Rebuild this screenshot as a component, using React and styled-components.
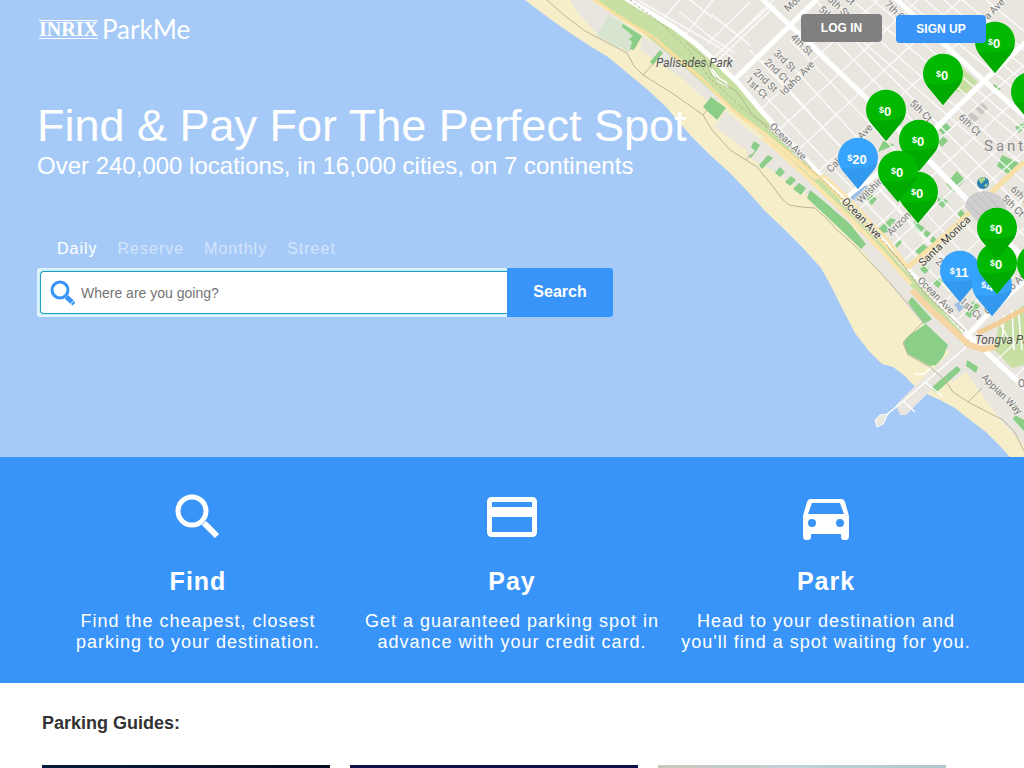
import React from 'react';
import styled, { createGlobalStyle } from 'styled-components';

const GlobalStyle = createGlobalStyle`
  *, *::before, *::after { box-sizing: border-box; }
  body { margin: 0; background: #fff; color: #333; font-family: "Liberation Sans", Arial, sans-serif; }
  h1, h2, h3, p { margin: 0; }
`;

const Hero = styled.section`
  position: relative;
  min-height: 457px;
  overflow: hidden;
  background: #a6caf8;
  color: #fff;
`;

const MapArt = styled.svg`
  position: absolute;
  top: 0;
  right: 0;
  width: 504px;
  height: 457px;
`;

const HeroContent = styled.div`
  position: relative;
  padding: 14px 38px 0 37px;
`;

const Header = styled.header`
  display: flex;
  justify-content: space-between;
  align-items: flex-start;
`;

const Logo = styled.a`
  display: flex;
  align-items: center;
  gap: 4px;
  height: 30px;
  padding-left: 2px;
  color: #fff;
  text-decoration: none;
`;

const LogoInrix = styled.span`
  height: 19px;
  border-top: 1px solid #fff;
  border-bottom: 1px solid #fff;
  font: bold 20px/17px "Liberation Serif", serif;
`;

const LogoParkMe = styled.span`
  font: 26px/30px Lato, sans-serif;
`;

const Actions = styled.nav`
  display: flex;
  gap: 14px;
`;

const ActionButton = styled.button`
  width: ${(p) => (p.$primary ? 90 : 81)}px;
  height: 28px;
  margin-top: ${(p) => (p.$primary ? 1 : 0)}px;
  padding: 0;
  border: 0;
  border-radius: 4px;
  background: ${(p) => (p.$primary ? '#3994f9' : '#808080')};
  color: #fff;
  font: bold 12px "Liberation Sans", sans-serif;
`;

const Title = styled.h1`
  margin-top: 56px;
  font-size: 45px;
  font-weight: 400;
  line-height: 52px;
`;

const Subtitle = styled.p`
  font-size: 24px;
  line-height: 28px;
`;

const Tabs = styled.div`
  display: flex;
  gap: 20px;
  margin-top: 59px;
  padding-left: 20px;
`;

const Tab = styled.button`
  padding: 0;
  border: 0;
  background: none;
  color: ${(p) => (p.$active ? '#fff' : 'rgba(255, 255, 255, 0.5)')};
  font: 16px/20px "Liberation Sans", sans-serif;
  letter-spacing: 1px;
`;

const SearchForm = styled.form`
  display: flex;
  width: 576px;
  max-width: 100%;
  height: 49px;
  margin-top: 9px;
  border-radius: 3px;
  overflow: hidden;
  background: #e4f5fa;
`;

const SearchField = styled.label`
  display: flex;
  flex: 1;
  align-items: center;
  margin: 3px 0 3px 3px;
  padding-left: 8px;
  gap: 6px;
  border: 1px solid #1f9fc4;
  border-right: 0;
  border-radius: 4px 0 0 4px;
  background: #fff;
  box-shadow: 0 0 3px #8fdcf0;
`;

const SearchInput = styled.input`
  flex: 1;
  min-width: 0;
  padding: 0;
  border: 0;
  outline: 0;
  background: none;
  color: #222;
  font: 14px/20px "Liberation Sans", sans-serif;
  &::placeholder { color: #757575; }
`;

const SearchButton = styled.button`
  width: 106px;
  padding: 0 0 2px;
  border: 0;
  background: #3994f9;
  color: #fff;
  font: bold 16px "Liberation Sans", sans-serif;
`;

const Features = styled.section`
  display: grid;
  grid-template-columns: repeat(3, 1fr);
  padding: 30px 41px;
  min-height: 226px;
  background: #3994f9;
  color: #fff;
  text-align: center;
`;

const Feature = styled.article`
  display: flex;
  flex-direction: column;
  align-items: center;
`;

const FeatureIcon = styled.svg`
  width: 60px;
  height: 60px;
`;

const FeatureTitle = styled.h2`
  margin-top: 20px;
  font-size: 25px;
  line-height: 29px;
  letter-spacing: 1px;
`;

const FeatureText = styled.p`
  max-width: 300px;
  margin-top: 15px;
  font-size: 18px;
  line-height: 21px;
  letter-spacing: 1px;
`;

const Guides = styled.section`
  padding: 30px 42px 40px;
`;

const GuidesTitle = styled.h3`
  font-size: 18px;
  line-height: 21px;
`;

const GuideGrid = styled.div`
  display: grid;
  grid-template-columns: repeat(auto-fill, 288px);
  gap: 20px;
  margin-top: 31px;
`;

const GuideCard = styled.a`
  height: 180px;
  background: ${(p) => p.$fill};
`;

const COAST =
  'M525 0L546 16L570 33L590 46L608 57L625 71L648 90L667 108L690 135L710 155L730 173L750 194L765 211L783 228L803 248L821 268L831 286L843 310L855 333L868 350L882 364L893 367L905 376L918 390L940 400L955 408L970 420L986 432L1000 446L1010 457L1024 457V0Z';
const CITY =
  'M628 0L672 26L695 43L716 62L738 83L764 114L790 142L818 173L830 178L852 204L880 238L914 276L940 304L966 334L1024 392V0Z';
const PARK =
  'M596 0L628 0L672 26L695 43L716 62L738 83L764 114L790 142L818 173L826 182L852 205L880 238L914 276L968 335L950 330L905 280L867 235L820 187L780 150L735 112L682 65L637 28Z';

const BUILT = [
  'M570 0L590 0L625 22L608 16L598 35L578 13Z',
  'M642 36L655 43L677 58L703 82L721 100L707 101L683 79L659 63L640 50Z',
  'M725 111L780 155L805 178L842 213L861 231L840 216L805 193L768 168L748 157L746 150L715 127Z',
  'M861 232L900 270L938 310L950 319L975 338L1024 388V445L1004 424L990 406L966 372L954 381L940 381L906 415L900 415L896 405L932 369L950 353L923 325L885 278L850 236Z',
];

const LAWN = [
  'M623 24L642 36L634 50L630 49L632 42L629 39L633 36L622 27Z',
  'M660 50L663 53L653 65L650 62Z',
  'M711 97L726 108L717 120L703 107Z',
  'M754 141L760 145L757 150L751 158L749 157L755 151L751 147Z',
  'M768 155L773 158L762 169L759 165Z',
  'M780 167L785 172L780 177L775 173Z',
  'M791 176L796 180L790 186L785 182Z',
  'M799 183L806 188L801 195L793 189Z',
  'M810 190L820 198L850 224L866 244L861 249L838 227L807 198Z',
  'M912 297L932 319L924 324L908 302Z',
  'M926 324L948 345L943 357L936 365L930 366L908 354L903 344L908 336Z',
  'M957 366L961 370L936 393L931 388Z',
  'M967 360L978 367L976 373L966 366Z',
  'M1015 415L1024 420V431L1013 419Z',
  'M883 141L895 145L878 152L880 147Z',
  'M994 84L1001 89L996 92L991 89Z',
  'M946 123L951 128L943 135L939 130Z',
  'M943 136L948 141L942 147L938 142Z',
  'M957 171L965 180L954 192L946 184Z',
  'M1002 155L1019 163L1008 174L997 166Z',
  'M938 195L948 201L943 208L938 204Z',
  'M961 209L965 214L961 218L957 214Z',
  'M870 193L877 199L872 205L866 199Z',
  'M914 221L925 228L920 233L914 229Z',
  'M891 218L896 220L890 226L895 231L883 233L878 229Z',
  'M922 243L930 249L922 258L915 251Z',
  'M925 264L930 269L925 274L920 269Z',
  'M938 277L943 282L938 288L932 282Z',
  'M973 301L980 306L970 318L965 314Z',
  'M901 239L903 241L897 248L895 245Z',
  'M926 230L931 233L927 238L923 235Z',
  'M933 236L938 241L934 246L930 241Z',
  'M1015 127L1024 123V128L1019 133Z',
];

const MINOR = [
  'M638 0L720 48L735 60', 'M680 12L713 39L735 53', 'M660 22L680 0', 'M686 34L713 0', 'M707 44L750 2', 'M720 52L773 0',
  'M712 59L768 8', 'M716 62L775 6', 'M690 0L712 17', 'M712 15L750 45', 'M750 50L970 285', 'M746 76L950 292',
  'M762 60L945 262', 'M776 49L960 250', 'M790 40L990 250', 'M800 30L1024 262', 'M820 25L1024 236', 'M836 22L1024 210',
  'M815 0L1024 182', 'M833 0L1024 166', 'M852 0L1024 143', 'M873 0L1024 130', 'M905 0L1024 97', 'M925 0L1024 82',
  'M944 0L1024 67', 'M962 0L1024 50', 'M986 0L1024 31', 'M762 108L878 0', 'M780 129L918 0', 'M798 150L960 0',
  'M818 172L1005 0', 'M858 210L1024 65', 'M874 229L1024 92', 'M890 247L1024 125', 'M902 262L1024 151', 'M925 290L1024 199',
  'M940 306L1024 228', 'M955 322L1024 256', 'M965 390L1018 340', 'M985 405L1024 368', 'M950 352L1006 406',
];

const MAJOR = [
  'M622 -4L672 26L695 43L716 62L738 83L764 114L790 142L818 173L852 204L880 238L914 276L968 335L1030 393',
  'M733 81L820 -4',
  'M755 -8L820 54L900 130L1024 258',
  'M893 -4L940 40L984 81L1030 121',
  'M841 202L935 129L984 81L1030 38',
  'M965 338L992 310L1030 276',
];

const STREETS = [
  [773, 54, 44, '3rd St'], [764, 63, 44, '2nd Ct'], [753, 73, 44, '2nd St'], [745, 81, 44, '1st Ct'],
  [790, 38, 44, '4th St'], [784, 96, -45, 'Idaho Ave'], [788, 12, -42, 'Montana'], [818, 10, 44, '5th Ct'],
  [827, 0, 44, '5th St'], [832, -13, 44, '6th Ct'], [884, 5, 44, '7th Ct'], [988, 20, -45, 'a Ave'],
  [909, 104, 44, '5th Ct'], [958, 118, 44, '6th Ct'], [769, 127, 45, 'Ocean Ave'], [831, 173, -47, 'California Ave'],
  [861, 204, -45, 'Wilshire'], [891, 236, -45, 'Arizona'], [1010, 190, 44, '6th St'], [1001, 199, 44, '5th Ct'],
  [917, 281, 45, 'Ocean Ave'], [935, 262, 44, '2nd St'], [959, 302, 44, '1st Ct'], [988, 315, -45, 'Colorado Ave'],
  [981, 378, 45, 'Appian Way'], [1018, 387, 0, 'O'],
];

const PINS = [
  [995, 42, '0'], [943, 74, '0'], [1031, 92, '0'], [886, 110, '0'], [858, 158, '20', true],
  [918, 192, '0'], [919, 140, '0'], [898, 171, '0'], [960, 271, '11', true], [992, 285, '40', true],
  [1037, 264, '0'], [997, 263, '0'], [997, 228, '0'],
];

function Pin({ x, y, price, blue }) {
  return (
    <g transform={`translate(${x} ${y})`}>
      <path d="M0 31L-15 13A20 20 0 1 1 15 13Z" fill={blue ? '#36a3fd' : '#00b900'} />
      <path d="M-17 10Q5 13 19 5Q18 9 15 13L0 31L-15 13Z" fill={blue ? '#3299ee' : '#00aa00'} />
      <text x="-1" y="6" textAnchor="middle" fill="#fff" fontFamily="Liberation Sans, sans-serif" fontWeight="700" fontSize="13">
        <tspan fontSize="9" dy="-3">$</tspan>
        <tspan dy="3">{price}</tspan>
      </text>
    </g>
  );
}

function CoastMap() {
  return (
    <MapArt viewBox="520 0 504 457" aria-hidden="true">
      <defs>
        <clipPath id="city"><path d={CITY} /></clipPath>
      </defs>
      <path d={COAST} fill="#f6eec9" />
      {BUILT.map((d) => <path key={d} d={d} fill="#e9e6df" />)}
      <path d="M608 15L623 23L642 36L629 52L612 44L597 36Z" fill="#d7e5d0" />
      <path d={PARK} fill="#c8dfa4" />
      <path d={CITY} fill="#e9e6df" />
      <path d="M962 68L978 82L966 94L952 90Z M1000 320L1024 305V365L1012 368L994 349Z" fill="#c8dfa4" />
      <path d="M970 111L979 118L968 129L962 123Z M981 101L988 108L982 115L975 109Z" fill="#cbc8c4" />
      {LAWN.map((d) => <path key={d} d={d} fill="#8ace88" />)}
      <g fill="none" stroke="#fff">
        <g clipPath="url(#city)" strokeWidth="1.6" opacity="0.8">
          {MINOR.map((d) => <path key={d} d={d} />)}
        </g>
        {MAJOR.map((d) => <path key={d} d={d} strokeWidth="5" />)}
        <path d="M880 420L906 399L966 347L976 336M903 401L915 412M925 382L942 396M914 374H924L931 368" strokeWidth="1.5" />
        <path d="M712 69L720 79L726 82L727 86L718 81L709 68M998 320L1010 342M1004 315L1002 344M1012 310L1014 350M1018 308L1022 350" strokeWidth="1.5" />
      </g>
      <path d="M854 194L866 185L869 190L857 201L850 198Z" fill="#9ebfe2" />
      <path d="M954 304L962 301L966 306L959 312Z" fill="#9ebfe2" />
      <path d="M875 420L880 415L888 414L883 424L877 427Z" fill="#e9e6df" stroke="#fff" />
      <g fill="none" strokeLinejoin="round">
        <path d="M592 -2L620 17L653 37L703 80L733 110L780 146L819 177L854 211L881 241L907 268" stroke="#f8df9f" strokeWidth="3" />
        <path d="M749 124L764 133L783 150L807 171L815 178L824 176L845 195L887 239L907 266" stroke="#fae5ae" strokeWidth="3" />
        <path d="M764 138L807 177L850 218L880 249L911 284" stroke="#fae5ae" strokeWidth="4" />
        <path d="M912 290L930 309L951 328L969 345L983 349L996 347" stroke="#f6d4a3" strokeWidth="6" />
        <path d="M978 333L999 323L1024 309" stroke="#f3cd98" strokeWidth="5" />
        <path d="M907 268L940 240L1024 162" stroke="#f8e1a6" strokeWidth="5" />
        <path d="M547 0L565 16L585 31L627 53L634 66L643 75L672 93L703 115L712 130L730 150L746 160L757 167L771 184L782 199L789 205L801 207L815 208L828 220L835 228L855 246L890 283L923 322L903 342L908 355L930 367L945 380L953 392L968 402L1003 420L1014 431L1024 451" stroke="#bcb69a" />
        <path d="M643 75L653 64M703 115L707 110M746 160L751 154M968 402L982 388" stroke="#bcb69a" />
        <path d="M630 0L663 25L688 49L710 78L740 106L770 130L820 178L864 219L886 244L922 288L966 334" stroke="#afb78c" strokeDasharray="3 2" />
        <path d="M686 43L704 57L712 76L737 92L753 115L785 139L812 169M888 247L905 268L925 294L965 331" stroke="#afb78c" />
      </g>
      <path d="M965 207Q965 198 975 193Q985 189 996 194Q1006 198 1006 208V225H980Z" fill="#cfcece" />
      <path d="M967 202L990 225M971 197L998 224M976 194L1004 222M983 192L1005 214" fill="none" stroke="#bbb" />
      <circle cx="983" cy="183" r="6" fill="#287fb0" />
      <path d="M978 179Q983 175 986 179L981 184ZM984 185L988 183L986 188Z" fill="#a4cf8e" />
      <g fill="#777" stroke="#f2f0eb" strokeWidth="2" paintOrder="stroke" fontFamily="Roboto, sans-serif" fontSize="10">
        {STREETS.map(([x, y, angle, name]) => (
          <text key={`${name}${x}`} transform={`translate(${x} ${y}) rotate(${angle})`}>{name}</text>
        ))}
      </g>
      <g fill="#40403c" stroke="#f5f0dc" strokeWidth="2" paintOrder="stroke" fontFamily="Roboto, sans-serif" fontSize="11">
        <text transform="translate(841 202) rotate(46)">Ocean Ave</text>
        <text transform="translate(923 267) rotate(-44)">Santa Monica</text>
      </g>
      <g fill="#555" fontFamily="Roboto, sans-serif" fontSize="12" fontStyle="italic">
        <text x="656" y="67">Palisades Park</text>
        <text x="975" y="344">Tongva Park</text>
      </g>
      <text x="984" y="151" fill="#8a8a8a" fontFamily="Roboto, sans-serif" fontSize="15" letterSpacing="3">Santa Monica</text>
      {PINS.map(([x, y, price, blue]) => <Pin key={`${x}-${y}`} x={x} y={y} price={price} blue={blue} />)}
    </MapArt>
  );
}

const FEATURES = [
  {
    title: 'Find',
    text: 'Find the cheapest, closest parking to your destination.',
    icon: (
      <g fill="none" stroke="#fff" strokeWidth="5">
        <circle cx="24" cy="24" r="14" />
        <path d="M36 36L49 49" strokeWidth="6" />
      </g>
    ),
  },
  {
    title: 'Pay',
    text: 'Get a guaranteed parking spot in advance with your credit card.',
    icon: (
      <path
        fill="#fff"
        fillRule="evenodd"
        d="M10 10H50Q55 10 55 15V45Q55 50 50 50H10Q5 50 5 45V15Q5 10 10 10ZM10 15V20H50V15ZM10 30V45H50V30Z"
      />
    ),
  },
  {
    title: 'Park',
    text: "Head to your destination and you'll find a spot waiting for you.",
    icon: (
      <path
        fill="#fff"
        fillRule="evenodd"
        d="M15 12H45Q48 12 49 15L53 29V49Q53 53 50 53H48Q45 53 45 50V47H15V50Q15 53 12 53H10Q7 53 7 49V29L11 15Q12 12 15 12ZM16 16L12 27H48L44 16ZM16 32A4 4 0 1 0 16 40A4 4 0 1 0 16 32ZM44 32A4 4 0 1 0 44 40A4 4 0 1 0 44 32Z"
      />
    ),
  },
];

const GUIDES = [
  { name: 'Parking guide one', fill: 'linear-gradient(90deg, #071a3b, #080d20)' },
  { name: 'Parking guide two', fill: '#121048' },
  { name: 'Parking guide three', fill: 'linear-gradient(90deg, #c9c8bd, #bfd1d6 50%, #b1c6d0)' },
];

export default function App() {
  return (
    <>
      <GlobalStyle />
      <main>
        <Hero>
          <CoastMap />
          <HeroContent>
            <Header>
              <Logo href="#">
                <LogoInrix>INRIX</LogoInrix>
                <LogoParkMe>ParkMe</LogoParkMe>
              </Logo>
              <Actions>
                <ActionButton type="button">LOG IN</ActionButton>
                <ActionButton type="button" $primary>SIGN UP</ActionButton>
              </Actions>
            </Header>
            <Title>Find &amp; Pay For The Perfect Spot</Title>
            <Subtitle>Over 240,000 locations, in 16,000 cities, on 7 continents</Subtitle>
            <Tabs>
              {['Daily', 'Reserve', 'Monthly', 'Street'].map((name, i) => (
                <Tab key={name} type="button" $active={i === 0}>{name}</Tab>
              ))}
            </Tabs>
            <SearchForm onSubmit={(e) => e.preventDefault()}>
              <SearchField htmlFor="destination">
                <svg width="26" height="26" viewBox="0 0 26 26" fill="none" stroke="#3994f9" aria-hidden="true">
                  <circle cx="11" cy="10" r="8" strokeWidth="3" />
                  <path d="M17.5 17L23 22" strokeWidth="5" />
                  <path d="M23.5 22.5L25 24" strokeWidth="4" />
                </svg>
                <SearchInput id="destination" type="text" placeholder="Where are you going?" aria-label="Destination" autoFocus />
              </SearchField>
              <SearchButton type="submit">Search</SearchButton>
            </SearchForm>
          </HeroContent>
        </Hero>
        <Features>
          {FEATURES.map((f) => (
            <Feature key={f.title}>
              <FeatureIcon viewBox="0 0 60 60" aria-hidden="true">{f.icon}</FeatureIcon>
              <FeatureTitle>{f.title}</FeatureTitle>
              <FeatureText>{f.text}</FeatureText>
            </Feature>
          ))}
        </Features>
        <Guides>
          <GuidesTitle>Parking Guides:</GuidesTitle>
          <GuideGrid>
            {GUIDES.map((g) => <GuideCard key={g.name} href="#" aria-label={g.name} $fill={g.fill} />)}
          </GuideGrid>
        </Guides>
      </main>
    </>
  );
}
